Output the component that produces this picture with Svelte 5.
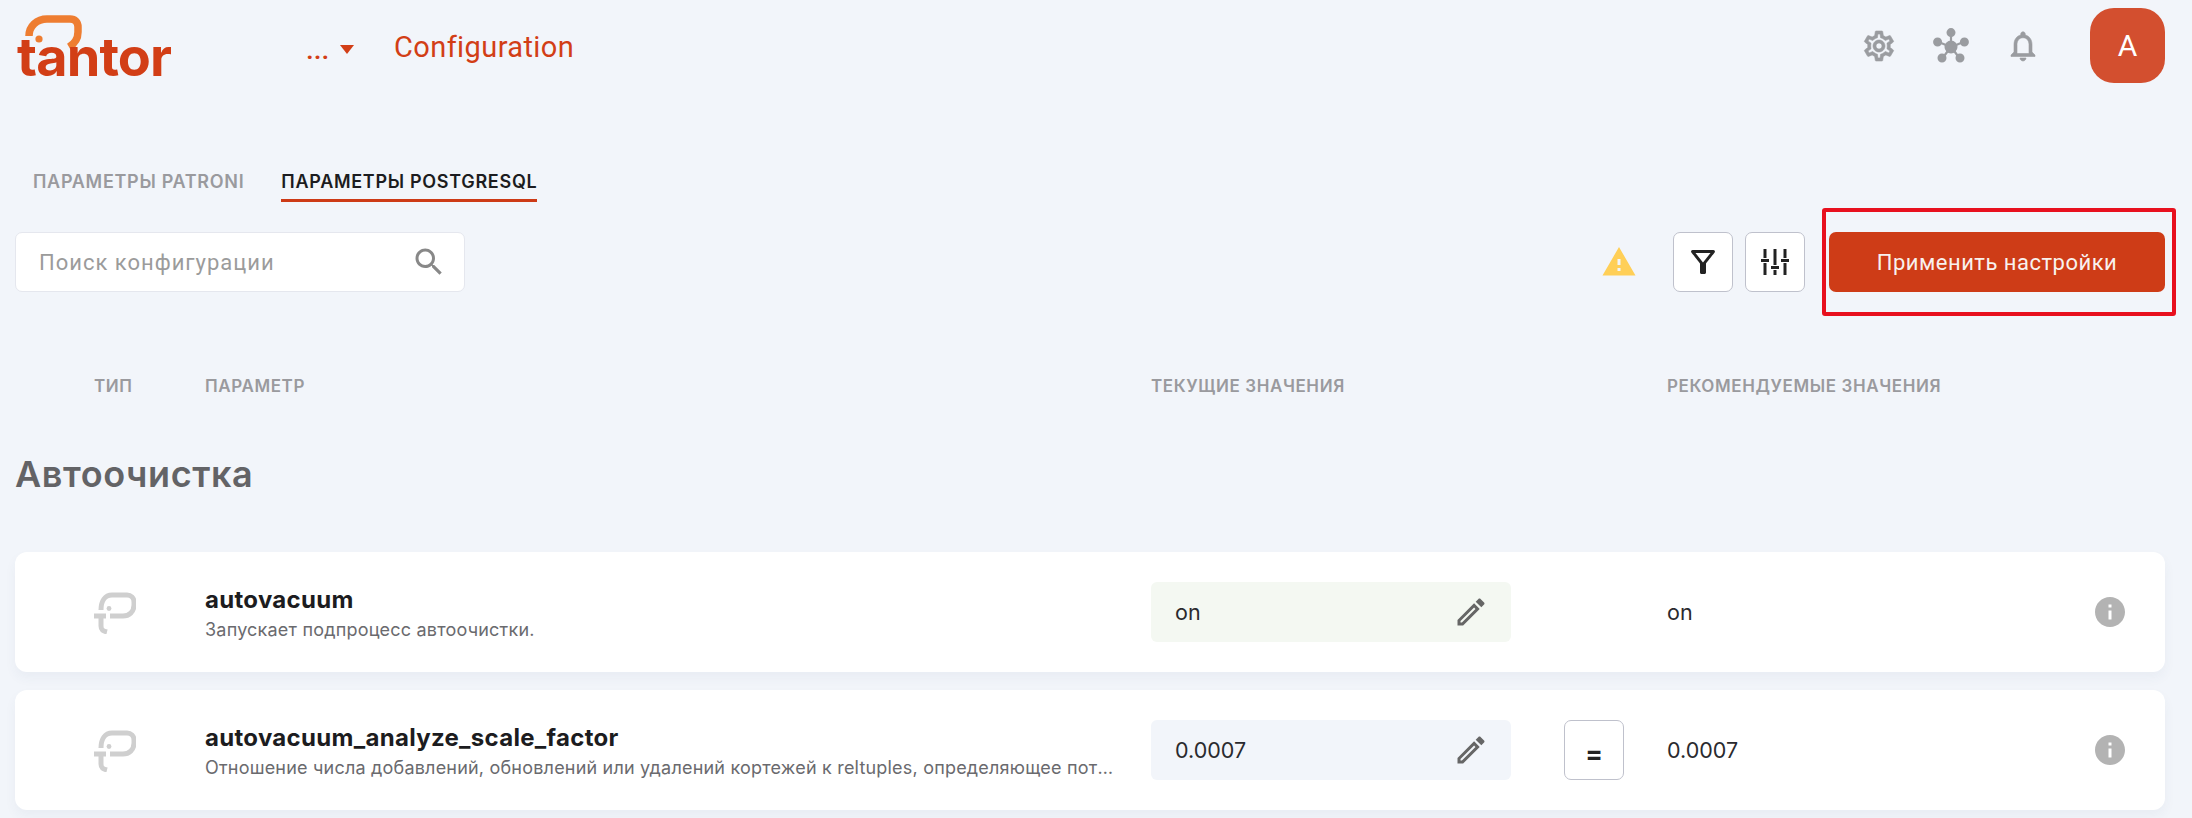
<script>
	const gear =
		'M19.43 12.98c.04-.32.07-.64.07-.98 0-.34-.03-.66-.07-.98l2.11-1.65c.19-.15.24-.42.12-.64l-2-3.46c-.09-.16-.26-.25-.44-.25-.06 0-.12.01-.17.03l-2.49 1c-.52-.4-1.08-.73-1.69-.98l-.38-2.65C14.46 2.18 14.25 2 14 2h-4c-.25 0-.46.18-.49.42l-.38 2.65c-.61.25-1.17.59-1.69.98l-2.49-1c-.06-.02-.12-.03-.18-.03-.17 0-.34.09-.43.25l-2 3.46c-.13.22-.07.49.12.64l2.11 1.65c-.04.32-.07.65-.07.98 0 .33.03.66.07.98l-2.11 1.65c-.19.15-.24.42-.12.64l2 3.46c.09.16.26.25.44.25.06 0 .12-.01.17-.03l2.49-1c.52.4 1.08.73 1.69.98l.38 2.65c.03.24.24.42.49.42h4c.25 0 .46-.18.49-.42l.38-2.65c.61-.25 1.17-.59 1.69-.98l2.49 1c.06.02.12.03.18.03.17 0 .34-.09.43-.25l2-3.46c.12-.22.07-.49-.12-.64l-2.11-1.65zm-1.98-1.71c.04.31.05.52.05.73 0 .21-.02.43-.05.73l-.14 1.13.89.7 1.08.84-.7 1.21-1.27-.51-1.04-.42-.9.68c-.43.32-.84.56-1.25.73l-1.06.43-.16 1.13-.2 1.35h-1.4l-.19-1.35-.16-1.13-1.06-.43c-.43-.18-.83-.41-1.23-.71l-.91-.7-1.06.43-1.27.51-.7-1.21 1.08-.84.89-.7-.14-1.13c-.03-.31-.05-.54-.05-.74s.02-.43.05-.73l.14-1.13-.89-.7-1.08-.84.7-1.21 1.27.51 1.04.42.9-.68c.43-.32.84-.56 1.25-.73l1.06-.43.16-1.13.2-1.35h1.39l.19 1.35.16 1.13 1.06.43c.43.18.83.41 1.23.71l.91.7 1.06-.43 1.27-.51.7 1.21-1.07.85-.89.7.14 1.13zM12 8c-2.21 0-4 1.79-4 4s1.79 4 4 4 4-1.79 4-4-1.79-4-4-4zm0 6c-1.1 0-2-.9-2-2s.9-2 2-2 2 .9 2 2-.9 2-2 2z';
	const bell =
		'M12 22c1.1 0 2-.9 2-2h-4c0 1.1.9 2 2 2zm6-6v-5c0-3.07-1.63-5.64-4.5-6.32V4c0-.83-.67-1.5-1.5-1.5s-1.5.67-1.5 1.5v.68C7.64 5.36 6 7.92 6 11v5l-2 2v1h16v-1l-2-2zm-2 1H8v-6c0-2.48 1.51-4.5 4-4.5s4 2.02 4 4.5v6z';
	const search =
		'M15.5 14h-.79l-.28-.27C15.41 12.59 16 11.11 16 9.5 16 5.91 13.09 3 9.5 3S3 5.91 3 9.5 5.91 16 9.5 16c1.61 0 3.09-.59 4.23-1.57l.27.28v.79l5 4.99L20.49 19l-4.99-5zm-6 0C7.01 14 5 11.99 5 9.5S7.01 5 9.5 5 14 7.01 14 9.5 11.99 14 9.5 14z';
	const pencil =
		'M14.06 9.02l.92.92L5.92 19H5v-.92l9.06-9.06M17.66 3c-.25 0-.51.1-.7.29l-1.83 1.83 3.75 3.75 1.83-1.83c.39-.39.39-1.02 0-1.41l-2.34-2.34c-.2-.2-.45-.29-.71-.29zm-3.6 3.19L3 17.25V21h3.75L17.81 9.94l-3.75-3.75z';
	const info =
		'M12 2C6.48 2 2 6.48 2 12s4.48 10 10 10 10-4.48 10-10S17.52 2 12 2zm1 15h-2v-6h2v6zm0-8h-2V7h2v2z';
	const warning = 'M1 21h22L12 2 1 21zm12-3h-2v-2h2v2zm0-4h-2v-4h2v4z';
	const filter =
		'M7 6h10l-5.01 6.3L7 6zm-2.75-.39C6.27 8.2 10 13 10 13v6c0 .55.45 1 1 1h2c.55 0 1-.45 1-1v-6s3.73-4.8 5.75-7.39C20.26 4.95 19.79 4 18.95 4H5.04c-.83 0-1.3.95-.79 1.61z';

	const rows = [
		{
			name: 'autovacuum',
			desc: 'Запускает подпроцесс автоочистки.',
			current: 'on',
			recommended: 'on',
			same: true
		},
		{
			name: 'autovacuum_analyze_scale_factor',
			desc: 'Отношение числа добавлений, обновлений или удалений кортежей к reltuples, определяющее потребность в анализе таблицы.',
			current: '0.0007',
			recommended: '0.0007',
			same: false
		}
	];
</script>

<div class="page">
	<header class="topbar">
		<div class="brand">
			<svg class="logo" viewBox="0 -10 156 82" aria-label="tantor">
				<path
					d="M12 21C12 11 20 4 30 4H53C58 4 61 7 61 12V17C61 24 57 29 52 32"
					fill="none"
					stroke="#ee7d31"
					stroke-width="7.5"
				/>
				<circle cx="22" cy="24" r="3.6" fill="#ee7d31" />
				<text x="0" y="61" textLength="155" class="logo-text">tantor</text>
			</svg>
			<div class="crumb">
				<span class="dots">...</span>
				<span class="caret"></span>
			</div>
			<span class="page-name">Configuration</span>
		</div>
		<div class="top-actions">
			<svg class="ico36 heavy" viewBox="0 0 24 24"><path d={gear} /></svg>
			<svg class="ico36" viewBox="0 0 36 36" fill="none" stroke="#9a9ca0" stroke-width="2.2">
				<path d="M18 8v6M8 15l5 2M28 15l-5 2M11.5 27.5l3-4M24.5 27.5l-3-4" />
				<circle cx="18" cy="4.6" r="3.4" />
				<circle cx="4.6" cy="14" r="3.4" />
				<circle cx="31.4" cy="14" r="3.4" />
				<circle cx="9" cy="30" r="3.4" />
				<circle cx="27" cy="30" r="3.4" />
				<circle cx="18" cy="19" r="5.4" />
			</svg>
			<svg class="ico36 heavy" viewBox="0 0 24 24"><path d={bell} /></svg>
			<div class="avatar">A</div>
		</div>
	</header>

	<nav class="tabs">
		<div class="tab">ПАРАМЕТРЫ PATRONI</div>
		<div class="tab active">ПАРАМЕТРЫ POSTGRESQL</div>
	</nav>

	<div class="toolbar">
		<div class="search">
			<span class="placeholder">Поиск конфигурации</span>
			<svg viewBox="0 0 24 24"><path d={search} /></svg>
		</div>
		<div class="tools">
			<svg class="warn" viewBox="0 0 24 24"><path d={warning} /></svg>
			<div class="tool-btns">
				<button class="square">
					<svg viewBox="0 0 24 24"><path d={filter} /></svg>
				</button>
				<button class="square">
					<svg class="sliders" viewBox="0 0 28 28" fill="none" stroke="#222" stroke-width="3">
						<path d="M4 1v9M4 15v12M14 1v16M14 22v5M24 1v9M24 15v12" />
						<path d="M0 12.5h8M10 19.5h8M20 12.5h8" />
					</svg>
				</button>
			</div>
			<div class="apply-wrap">
				<button class="apply">Применить настройки</button>
				<div class="highlight"></div>
			</div>
		</div>
	</div>

	<div class="grid table-head">
		<div class="type-col">ТИП</div>
		<div>ПАРАМЕТР</div>
		<div>ТЕКУЩИЕ ЗНАЧЕНИЯ</div>
		<div></div>
		<div>РЕКОМЕНДУЕМЫЕ ЗНАЧЕНИЯ</div>
	</div>

	<h2 class="section">Автоочистка</h2>

	<div class="rows">
		{#each rows as row (row.name)}
			<div class="grid card">
				<div class="type-col">
					<svg class="mark" viewBox="0 0 42 42" fill="none" stroke="#cfcfcf" stroke-width="5">
						<path d="M7 18C7 9 11 3 18 3H33C37 3 40 6 40 10V13C40 20 35 24 29 24H16" />
						<path d="M7 22V34C7 38 9 39 13 40M0 24H12" />
						<circle cx="15" cy="16.5" r="2.4" fill="#cfcfcf" stroke="none" />
					</svg>
				</div>
				<div class="param">
					<div class="param-name">{row.name}</div>
					<div class="param-desc">{row.desc}</div>
				</div>
				<div class="value" class:same={row.same}>
					<span>{row.current}</span>
					<svg viewBox="0 0 24 24"><path d={pencil} /></svg>
				</div>
				<div class="eq-cell">
					{#if !row.same}
						<button class="eq">=</button>
					{/if}
				</div>
				<div class="rec">
					<span>{row.recommended}</span>
					<svg viewBox="0 0 24 24"><path d={info} /></svg>
				</div>
			</div>
		{/each}
	</div>
</div>

<style>
	:global(body) {
		background: #f2f5fa;
	}

	.page {
		height: 818px;
		overflow: hidden;
		background: #f2f5fa;
		font-family: Inter, sans-serif;
	}

	.topbar {
		height: 91px;
		display: flex;
		justify-content: space-between;
		align-items: center;
		padding: 0 27px 0 17px;
		box-sizing: border-box;
	}

	.brand {
		display: flex;
		align-items: center;
	}

	.logo {
		width: 156px;
		height: 82px;
		overflow: visible;
	}

	.logo-text {
		font-family: Inter, sans-serif;
		font-weight: 700;
		font-size: 54px;
		fill: #d23e16;
	}

	.crumb {
		display: flex;
		align-items: center;
		margin: 8px 0 0 133px;
		gap: 11px;
		color: #d23e16;
		font-family: Roboto, sans-serif;
		font-size: 28px;
		font-weight: 500;
		width: 88px;
	}

	.dots {
		line-height: 30px;
	}

	.caret {
		width: 0;
		height: 0;
		border-left: 7.5px solid transparent;
		border-right: 7.5px solid transparent;
		border-top: 9px solid #d23e16;
	}

	.page-name {
		margin-top: 2px;
		color: #d23e16;
		font-family: Roboto, sans-serif;
		font-size: 29px;
		letter-spacing: 0.4px;
	}

	.top-actions {
		display: flex;
		align-items: center;
		gap: 36px;
	}

	.ico36 {
		width: 36px;
		height: 36px;
		fill: #9a9ca0;
	}

	.heavy path {
		stroke: #9a9ca0;
		stroke-width: 0.4;
	}

	.avatar {
		width: 75px;
		height: 75px;
		margin-left: 13px;
		border-radius: 24px;
		background: #d34f2f;
		color: #fff;
		font-family: Roboto, sans-serif;
		font-size: 30px;
		display: flex;
		align-items: center;
		justify-content: center;
	}

	.tabs {
		display: flex;
		gap: 37px;
		margin-top: 74px;
		padding-left: 33px;
	}

	.tab {
		padding: 7px 0;
		line-height: 20px;
		font-size: 18px;
		font-weight: 600;
		letter-spacing: 0.7px;
		color: #9a9a9e;
		border-bottom: 3px solid transparent;
		white-space: nowrap;
	}

	.tab.active {
		color: #1c1c20;
		border-bottom-color: #cd3a16;
	}

	.toolbar {
		display: flex;
		justify-content: space-between;
		margin-top: 30px;
		padding: 0 27px 0 15px;
		height: 60px;
	}

	.search {
		width: 450px;
		box-sizing: border-box;
		background: #fff;
		border: 1px solid #e5e7ee;
		border-radius: 7px;
		display: flex;
		align-items: center;
		justify-content: space-between;
		padding: 0 17px 0 23px;
	}

	.placeholder {
		font-family: Roboto, sans-serif;
		font-size: 22px;
		letter-spacing: 1px;
		color: #9b9b9b;
	}

	.search svg {
		width: 36px;
		height: 36px;
		fill: #888;
	}

	.tools {
		display: flex;
		align-items: center;
	}

	.warn {
		width: 36px;
		height: 36px;
		fill: #ffcf57;
		margin-right: 36px;
	}

	.tool-btns {
		display: flex;
		gap: 12px;
		margin-right: 24px;
	}

	.square {
		width: 60px;
		height: 60px;
		padding: 0;
		background: #fff;
		border: 1px solid #bfc1cc;
		border-radius: 7px;
		display: flex;
		align-items: center;
		justify-content: center;
	}

	.square svg {
		width: 36px;
		height: 36px;
		fill: #222;
	}

	.square .sliders {
		width: 28px;
		height: 28px;
		fill: none;
	}

	.apply-wrap {
		position: relative;
	}

	.apply {
		display: block;
		width: 336px;
		height: 60px;
		background: #ce3c17;
		color: #f8f1ee;
		border: none;
		border-radius: 7px;
		font-family: Roboto, sans-serif;
		font-size: 22px;
		letter-spacing: 0.5px;
	}

	.highlight {
		position: absolute;
		top: -24px;
		left: -7px;
		right: -11px;
		bottom: -24px;
		border: 4px solid #e8101e;
		border-radius: 3px;
	}

	.grid {
		display: grid;
		grid-template-columns: 190px 946px 360px 156px 1fr;
		align-items: center;
	}

	.table-head {
		margin: 82px 0 0 15px;
		width: 2149px;
		height: 24px;
		font-size: 17px;
		font-weight: 600;
		letter-spacing: 0.6px;
		color: #9a9a9e;
		white-space: nowrap;
	}

	.type-col {
		padding-left: 79px;
	}

	.section {
		margin: 56px 0 0 15px;
		height: 40px;
		line-height: 40px;
		font-size: 36px;
		font-weight: 600;
		letter-spacing: 0.6px;
		color: #636366;
	}

	.rows {
		display: flex;
		flex-direction: column;
		gap: 18px;
		margin: 58px 27px 0 15px;
	}

	.card {
		height: 120px;
		background: #fff;
		border-radius: 12px;
		box-shadow: 0 6px 12px rgba(60, 80, 120, 0.05);
	}

	.mark {
		display: block;
		width: 42px;
		height: 42px;
		margin-top: 1px;
	}

	.param {
		min-width: 0;
		padding: 3px 36px 0 0;
	}

	.param-name {
		font-size: 24px;
		font-weight: 700;
		letter-spacing: 0.3px;
		line-height: 32px;
		color: #1c1c20;
	}

	.param-desc {
		font-size: 18px;
		letter-spacing: 0.2px;
		line-height: 26px;
		margin-top: 1px;
		color: #6a6a6e;
		white-space: nowrap;
		overflow: hidden;
		text-overflow: ellipsis;
	}

	.value {
		height: 60px;
		box-sizing: border-box;
		background: #f2f5fa;
		border-radius: 6px;
		padding: 0 22px 0 24px;
		display: flex;
		align-items: center;
		justify-content: space-between;
		font-size: 21.5px;
		color: #2a2a2e;
	}

	.value.same {
		background: #f4f8f2;
	}

	.value svg {
		width: 36px;
		height: 36px;
		fill: #666;
	}

	.eq-cell {
		padding-left: 53px;
	}

	.eq {
		display: block;
		width: 60px;
		height: 60px;
		padding: 6px 0 0;
		background: #fff;
		border: 1px solid #bfc1cc;
		border-radius: 7px;
		font-family: Inter, sans-serif;
		font-size: 26px;
		font-weight: 700;
		color: #222;
	}

	.rec {
		display: flex;
		align-items: center;
		justify-content: space-between;
		padding-right: 37px;
		font-size: 21.5px;
		color: #2a2a2e;
	}

	.rec svg {
		width: 36px;
		height: 36px;
		fill: #b3b3b3;
	}
</style>
